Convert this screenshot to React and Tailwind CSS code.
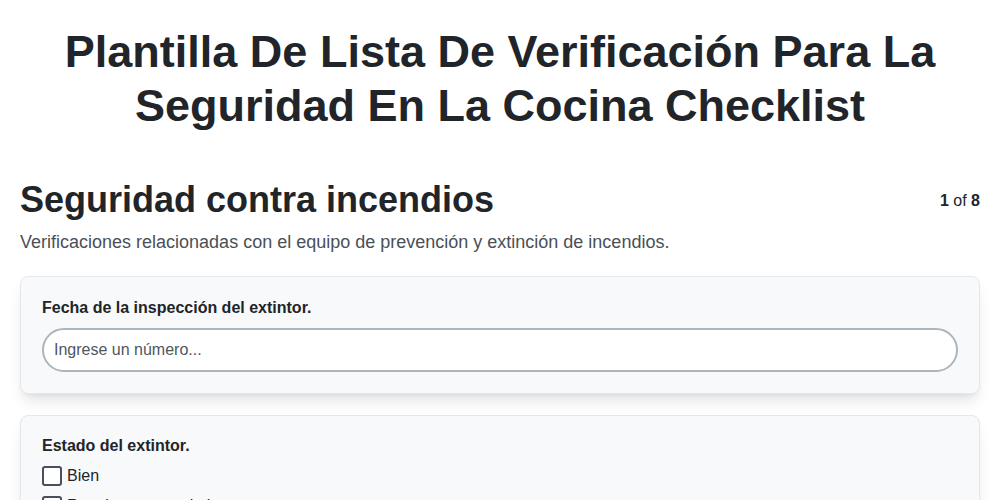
const options = ['Bien', 'Requiere mantenimiento', 'Vencido'];

export default function App() {
  return (
    <div className="min-h-screen bg-white font-['Liberation_Sans',Arial,sans-serif] text-[#212529]">
      <div className="px-5 pt-[25px]">
        <h1 className="text-center text-[45px] font-bold leading-[54px]">
          Plantilla De Lista De Verificación Para La Seguridad En La Cocina Checklist
        </h1>

        <div className="mt-[45px] flex items-start justify-between">
          <h2 className="text-[36px] font-bold leading-[43px]">Seguridad contra incendios</h2>
          <div className="pt-[11px] text-base">
            <span className="font-bold">1</span> of <span className="font-bold">8</span>
          </div>
        </div>
        <p className="mt-[8px] text-lg leading-[27px] text-[#495057]">
          Verificaciones relacionadas con el equipo de prevención y extinción de incendios.
        </p>

        <div className="mt-5 rounded-lg border border-[#e5e7eb] bg-[#f8f9fa] px-[21px] pt-[19px] pb-[21px] shadow-lg">
          <label className="block text-base font-bold leading-6">Fecha de la inspección del extintor.</label>
          <input
            type="text"
            placeholder="Ingrese un número..."
            className="mt-2 h-11 w-full rounded-full border-2 border-[#adb5bd] bg-white px-[10px] text-base text-[#212529] placeholder:text-[#50565d] focus:outline-none"
          />
        </div>

        <div className="mt-[21px] rounded-lg border border-[#e5e7eb] bg-[#f8f9fa] px-[21px] pt-[18px] pb-5 shadow-lg">
          <label className="block text-base font-bold leading-6">Estado del extintor.</label>
          <div className="mt-[7px] flex flex-col gap-2">
            {options.map((o) => (
              <label key={o} className="flex items-center gap-[5px] text-base leading-[22px]">
                <span className="h-5 w-5 rounded-[3px] border-2 border-[#494f5c] bg-white" />
                <span>{o}</span>
              </label>
            ))}
          </div>
        </div>
      </div>
    </div>
  );
}
